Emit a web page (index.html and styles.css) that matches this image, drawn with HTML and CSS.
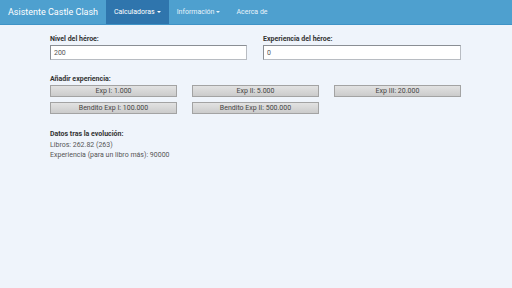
FILE: index.html
```html
<html lang="es">

<head>
    <meta charset="UTF-8">
    <meta name="viewport" content="width=device-width, initial-scale=1.0">
    <title>Asistente Castle Clash</title>

    <link rel="stylesheet" href="styles.css">
</head>

<body>
    <div class="navbar">
        <div class="brand">Asistente Castle Clash</div>
        <div class="nav-item active">Calculadoras<span class="caret"></span></div>
        <div class="nav-item">Información<span class="caret"></span></div>
        <div class="nav-item">Acerca de</div>
    </div>

    <div class="container">
        <div class="form-row">
            <div class="form-group">
                <label class="label">Nivel del héroe:</label>
                <input class="form-input" type="text" value="200">
            </div>
            <div class="form-group">
                <label class="label">Experiencia del héroe:</label>
                <input class="form-input" type="text" value="0">
            </div>
        </div>

        <div class="section">
            <div class="label">Añadir experiencia:</div>
            <div class="btn-grid">
                <button class="btn">Exp I: 1.000</button>
                <button class="btn">Exp II: 5.000</button>
                <button class="btn">Exp III: 20.000</button>
                <button class="btn">Bendito Exp I: 100.000</button>
                <button class="btn">Bendito Exp II: 500.000</button>
            </div>
        </div>

        <div class="results">
            <div class="label">Datos tras la evolución:</div>
            <div class="line">Libros: 262.82 (263)</div>
            <div class="line">Experiencia (para un libro más): 90000</div>
        </div>
    </div>
</body>

</html>
```

FILE: styles.css
```css
body {
    margin: 0;
    background-color: #eff4fb;
    font-family: Roboto, "Liberation Sans", sans-serif;
    color: #333;
}

.navbar {
    height: 24px;
    background-color: #4ea0cf;
    border-bottom: 1px solid #3f93c6;
    display: flex;
    align-items: stretch;
    color: white;
}

.brand {
    font-size: 9px;
    padding: 0 8px;
    width: 90px;
    flex: none;
    white-space: nowrap;
    display: flex;
    align-items: center;
}

.nav-item {
    font-size: 7px;
    padding: 0 8px;
    white-space: nowrap;
    display: flex;
    align-items: center;
    color: #e8f3fa;
}

.nav-item.active {
    background-color: #2f75ad;
    color: white;
}

.caret {
    display: inline-block;
    margin-left: 2px;
    border-top: 2px solid currentColor;
    border-left: 2px solid transparent;
    border-right: 2px solid transparent;
}

.container {
    width: 411px;
    margin-left: 50px;
    padding-top: 8px;
}

.form-row {
    display: grid;
    grid-template-columns: 197px 198px;
    column-gap: 16px;
}

.form-group {
    display: flex;
    flex-direction: column;
}

.label {
    font-size: 7px;
    font-weight: 700;
    color: #333;
    height: 11px;
    display: flex;
    align-items: center;
    margin-bottom: 1px;
}

.form-input {
    height: 15px;
    box-sizing: border-box;
    border: 1px solid #b8bcc2;
    border-top-color: #8a8e94;
    border-left-color: #8a8e94;
    background-color: white;
    font-family: Roboto, "Liberation Sans", sans-serif;
    font-size: 7px;
    color: #555;
    padding: 0 3px;
    margin: 0;
}

.section {
    margin-top: 13px;
}

.btn-grid {
    display: grid;
    grid-template-columns: 127px 127px 127px;
    column-gap: 15px;
    row-gap: 5px;
}

.btn {
    height: 12px;
    box-sizing: border-box;
    border: 1px solid #a3a3a3;
    background: linear-gradient(#e2e2e2, #cbcbcb);
    font-family: Roboto, "Liberation Sans", sans-serif;
    font-size: 7px;
    color: #444;
    padding: 0;
    margin: 0;
}

.results {
    margin-top: 14px;
}

.line {
    font-size: 7px;
    color: #555;
    height: 10px;
    display: flex;
    align-items: center;
}
```
